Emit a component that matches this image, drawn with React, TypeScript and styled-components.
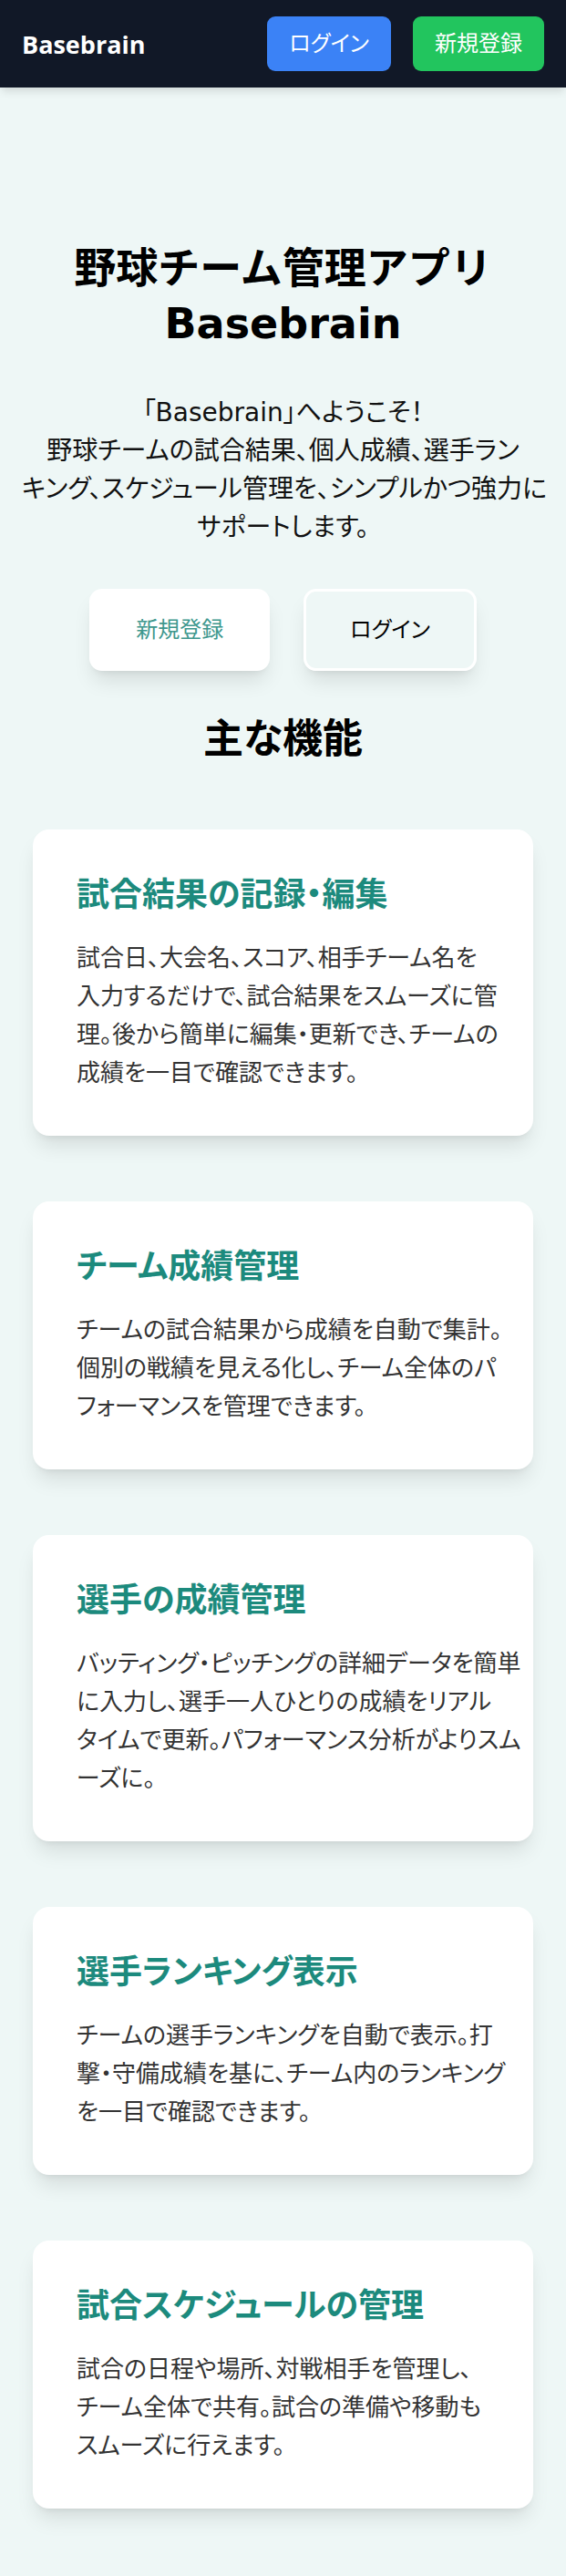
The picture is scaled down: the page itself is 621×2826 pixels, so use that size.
import styled, { createGlobalStyle } from 'styled-components'

const GlobalStyle = createGlobalStyle`
  * {
    box-sizing: border-box;
  }

  body {
    margin: 0;
    background: #eef7f6;
    font-family: 'DejaVu Sans', 'Noto Sans CJK JP', sans-serif;
    font-feature-settings: 'palt';
    color: #111;
  }
`

const StyledHeader = styled.header`
  height: 96px;
  padding: 0 24px;
  background: #111827;
  display: flex;
  align-items: center;
  justify-content: space-between;
  box-shadow: 0 6px 9px -2px rgba(0, 0, 0, 0.12);

  .logo {
    font-family: 'Open Sans', 'Noto Sans CJK JP', sans-serif;
    font-weight: 700;
    font-size: 27px;
    color: #fff;
  }

  nav {
    display: flex;
    gap: 24px;
  }
`

const NavButton = styled.a<{ $color: string }>`
  display: block;
  padding: 14px 24px;
  font-size: 24px;
  line-height: 32px;
  color: #fff;
  background: ${(props) => props.$color};
  border-radius: 9px;
  text-decoration: none;
  cursor: pointer;
`

const Line = styled.span`
  display: block;
  white-space: nowrap;
`

const Hero = styled.section`
  padding: 168px 24px 0;
  text-align: center;

  h1 {
    margin: 0 0 46px;
    font-size: 46px;
    line-height: 61px;
    font-weight: 700;
    font-feature-settings: normal;
    color: #000;
  }

  p {
    margin: 0 0 46px;
    font-size: 28px;
    line-height: 42px;
    color: #111;
  }

  .buttons {
    display: flex;
    justify-content: center;
    gap: 37px;
  }
`

const HeroButton = styled.a<{ $filled?: boolean }>`
  display: block;
  padding: 24px 48px;
  font-size: 24px;
  line-height: 36px;
  border: 3px solid #fff;
  border-radius: 14px;
  background: ${(props) => (props.$filled ? '#fff' : 'transparent')};
  color: ${(props) => (props.$filled ? '#3d978d' : '#000')};
  box-shadow: 0 15px 22px -4px rgba(0, 0, 0, 0.1),
    0 6px 9px -6px rgba(0, 0, 0, 0.1);
  text-decoration: none;
  cursor: pointer;
`

const Features = styled.section`
  padding: 0 36px 72px;

  h2 {
    margin: 48px 0 72px;
    text-align: center;
    font-size: 44px;
    line-height: 54px;
    font-weight: 700;
    color: #000;
  }

  .list {
    display: flex;
    flex-direction: column;
    gap: 72px;
  }
`

const Card = styled.article`
  padding: 48px;
  background: #fff;
  border-radius: 18px;
  box-shadow: 0 15px 22px -4px rgba(0, 0, 0, 0.1),
    0 6px 9px -6px rgba(0, 0, 0, 0.1);

  h3 {
    margin: 0 0 24px;
    font-size: 36px;
    line-height: 48px;
    font-weight: 700;
    color: #1c8a7d;
  }

  p {
    margin: 0;
    font-size: 26px;
    line-height: 42px;
    color: #333;
  }
`

const features = [
  {
    title: '試合結果の記録・編集',
    lines: [
      '試合日、大会名、スコア、相手チーム名を',
      '入力するだけで、試合結果をスムーズに管',
      '理。後から簡単に編集・更新でき、チームの',
      '成績を一目で確認できます。',
    ],
  },
  {
    title: 'チーム成績管理',
    lines: [
      'チームの試合結果から成績を自動で集計。',
      '個別の戦績を見える化し、チーム全体のパ',
      'フォーマンスを管理できます。',
    ],
  },
  {
    title: '選手の成績管理',
    lines: [
      'バッティング・ピッチングの詳細データを簡単',
      'に入力し、選手一人ひとりの成績をリアル',
      'タイムで更新。パフォーマンス分析がよりスム',
      'ーズに。',
    ],
  },
  {
    title: '選手ランキング表示',
    lines: [
      'チームの選手ランキングを自動で表示。打',
      '撃・守備成績を基に、チーム内のランキング',
      'を一目で確認できます。',
    ],
  },
  {
    title: '試合スケジュールの管理',
    lines: [
      '試合の日程や場所、対戦相手を管理し、',
      'チーム全体で共有。試合の準備や移動も',
      'スムーズに行えます。',
    ],
  },
]

export default function App() {
  return (
    <>
      <GlobalStyle />
      <StyledHeader>
        <span className="logo">Basebrain</span>
        <nav>
          <NavButton $color="#3b82f6">ログイン</NavButton>
          <NavButton $color="#22c55e">新規登録</NavButton>
        </nav>
      </StyledHeader>

      <Hero>
        <h1>
          野球チーム管理アプリ
          <br />
          Basebrain
        </h1>
        <p>
          {[
            '「Basebrain」へようこそ！',
            '野球チームの試合結果、個人成績、選手ラン',
            'キング、スケジュール管理を、シンプルかつ強力に',
            'サポートします。',
          ].map((line) => (
            <Line key={line}>{line}</Line>
          ))}
        </p>
        <div className="buttons">
          <HeroButton $filled>新規登録</HeroButton>
          <HeroButton>ログイン</HeroButton>
        </div>
      </Hero>

      <Features>
        <h2>主な機能</h2>
        <div className="list">
          {features.map((feature) => (
            <Card key={feature.title}>
              <h3>{feature.title}</h3>
              <p>
                {feature.lines.map((line) => (
                  <Line key={line}>{line}</Line>
                ))}
              </p>
            </Card>
          ))}
        </div>
      </Features>
    </>
  )
}
